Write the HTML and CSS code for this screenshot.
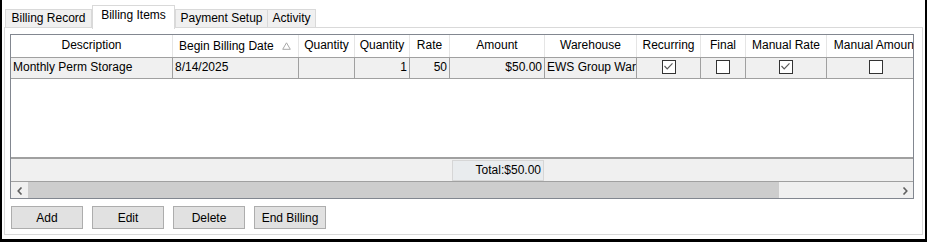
FILE: index.html
```html
<!DOCTYPE html>
<html lang="en">
<head>
    <meta charset="UTF-8">
    <title>Billing Items</title>
    <link rel="stylesheet" href="styles.css">
</head>
<body>
<div class="window">
    <div class="tabs">
        <div class="tab tab-record">Billing Record</div>
        <div class="tab tab-items active">Billing Items</div>
        <div class="tab tab-payment">Payment Setup</div>
        <div class="tab tab-activity">Activity</div>
    </div>

    <div class="panel">
        <div class="grid">
            <div class="row head">
                <div class="cell c-desc center">Description</div>
                <div class="cell c-date sort">
                    <span>Begin Billing Date</span>
                    <svg class="sort-icon" width="9" height="8" viewBox="0 0 9 8">
                        <path d="M4.5 0.8 L8.3 7.3 L0.7 7.3 Z" fill="none" stroke="#a8a8a8" stroke-width="1"/>
                    </svg>
                </div>
                <div class="cell c-qty center">Quantity</div>
                <div class="cell c-qty2 center">Quantity</div>
                <div class="cell c-rate center">Rate</div>
                <div class="cell c-amount center">Amount</div>
                <div class="cell c-wh center">Warehouse</div>
                <div class="cell c-rec center">Recurring</div>
                <div class="cell c-final center">Final</div>
                <div class="cell c-mrate center">Manual Rate</div>
                <div class="cell c-mamount center">Manual Amount</div>
            </div>
            <div class="row data">
                <div class="cell c-desc">Monthly Perm Storage</div>
                <div class="cell c-date">8/14/2025</div>
                <div class="cell c-qty right"></div>
                <div class="cell c-qty2 right">1</div>
                <div class="cell c-rate right">50</div>
                <div class="cell c-amount right">$50.00</div>
                <div class="cell c-wh">EWS Group Warehouse</div>
                <div class="cell c-rec center">
                    <span class="check"><svg width="11" height="11" viewBox="0 0 11 11"><path d="M1.5 5 L4.2 7.8 L9.5 2.4" fill="none" stroke="#5a5a5a" stroke-width="1.2"/></svg></span>
                </div>
                <div class="cell c-final center"><span class="check"></span></div>
                <div class="cell c-mrate center">
                    <span class="check"><svg width="11" height="11" viewBox="0 0 11 11"><path d="M1.5 5 L4.2 7.8 L9.5 2.4" fill="none" stroke="#5a5a5a" stroke-width="1.2"/></svg></span>
                </div>
                <div class="cell c-mamount center"><span class="check"></span></div>
            </div>
            <div class="empty"></div>
            <div class="footer">
                <div class="total">Total:$50.00</div>
            </div>
            <div class="hscroll">
                <div class="arrow">
                    <svg width="6" height="8" viewBox="0 0 6 8"><path d="M4.5 0.5 L1.2 4 L4.5 7.5" fill="none" stroke="#606060" stroke-width="1.6"/></svg>
                </div>
                <div class="thumb"></div>
                <div class="track"></div>
                <div class="arrow">
                    <svg width="6" height="8" viewBox="0 0 6 8"><path d="M1.5 0.5 L4.8 4 L1.5 7.5" fill="none" stroke="#606060" stroke-width="1.6"/></svg>
                </div>
            </div>
        </div>

        <div class="buttons">
            <button>Add</button>
            <button>Edit</button>
            <button>Delete</button>
            <button>End Billing</button>
        </div>
    </div>
</div>
</body>
</html>
```

FILE: styles.css
```css
body {
    margin: 0;
    background: #fff;
    font-family: "Liberation Sans", Arial, sans-serif;
    font-size: 12px;
    color: #000;
}

.window {
    box-sizing: border-box;
    width: 927px;
    height: 242px;
    border-left: 2px solid #000;
    border-right: 2px solid #000;
    border-bottom: 3px solid #000;
    background: #fff;
}

/* tabs */

.tabs {
    display: flex;
    align-items: flex-end;
    height: 27px;
    padding-left: 3px;
    position: relative;
    z-index: 1;
}

.tab {
    box-sizing: border-box;
    height: 18px;
    line-height: 17px;
    text-align: center;
    background: #f0f0f0;
    border: 1px solid #d9d9d9;
    border-bottom: none;
}

.tab + .tab {
    border-left: none;
}

.tab-record {
    width: 87px;
}

.tab-items {
    width: 83px;
}

.tab-payment {
    width: 93px;
}

.tab-activity {
    width: 48px;
}

.tab.active {
    height: 24px;
    line-height: 19px;
    margin-bottom: -2px;
    background: #fff;
    border-left: 1px solid #d9d9d9;
}

.tab.active + .tab {
    border-left: 1px solid #d9d9d9;
}

/* panel */

.panel {
    box-sizing: border-box;
    height: 208px;
    margin: 0 2px;
    border: 1px solid #d9d9d9;
    padding: 6px 8px 0 5px;
}

.grid {
    box-sizing: border-box;
    width: 904px;
    height: 165px;
    border: 1px solid #828790;
    overflow: hidden;
}

.row {
    display: flex;
    white-space: nowrap;
}

.cell {
    box-sizing: border-box;
    flex: none;
    overflow: hidden;
    padding: 0 2px;
}

.head {
    height: 22px;
    line-height: 21px;
    border-bottom: 1px solid #a0a0a0;
    background: #fff;
}

.head .cell {
    border-right: 1px solid #e5e5e5;
}

.data {
    height: 20px;
    line-height: 19px;
    border-bottom: 1px solid #a0a0a0;
    background: #f0f0f0;
}

.data .cell {
    border-right: 1px solid #a0a0a0;
}

.center {
    text-align: center;
}

.right {
    text-align: right;
}

.c-desc { width: 162px; }
.c-date { width: 126px; }
.c-qty { width: 56px; }
.c-qty2 { width: 55px; }
.c-rate { width: 40px; }
.c-amount { width: 95px; }
.c-wh { width: 92px; }
.c-rec { width: 64px; }
.c-final { width: 45px; }
.c-mrate { width: 81px; }
.c-mamount { width: 98px; }

.head .c-date {
    padding-left: 6px;
}

.sort {
    display: flex;
    align-items: center;
    justify-content: space-between;
    padding-right: 7px;
}

.sort-icon {
    margin-top: -1px;
}

.check {
    display: inline-flex;
    box-sizing: border-box;
    width: 14px;
    height: 14px;
    border: 1px solid #333;
    background: #fff;
    vertical-align: middle;
    margin-top: -2px;
}

.empty {
    height: 78px;
    background: #fff;
    border-bottom: 2px solid #a0a0a0;
}

.footer {
    height: 23px;
    background: #f0f0f0;
    border-bottom: 1px solid #a0a0a0;
    box-sizing: border-box;
    padding: 1px 0 0 441px;
}

.total {
    box-sizing: border-box;
    width: 92px;
    height: 21px;
    line-height: 19px;
    text-align: right;
    padding-right: 2px;
    background: #e9ecee;
    border: 1px solid #d6d6d6;
}

.hscroll {
    display: flex;
    height: 18px;
    background: #f0f0f0;
}

.arrow {
    width: 17px;
    display: flex;
    align-items: center;
    justify-content: center;
}

.thumb {
    width: 751px;
    background: #cdcdcd;
}

.track {
    flex: 1;
}

/* buttons */

.buttons {
    display: flex;
    gap: 9px;
    padding: 7px 0 0 1px;
}

button {
    box-sizing: border-box;
    width: 72px;
    height: 23px;
    margin: 0;
    padding: 0;
    background: #e1e1e1;
    border: 1px solid #adadad;
    font-family: "Liberation Sans", Arial, sans-serif;
    font-size: 12px;
    color: #000;
}
```
